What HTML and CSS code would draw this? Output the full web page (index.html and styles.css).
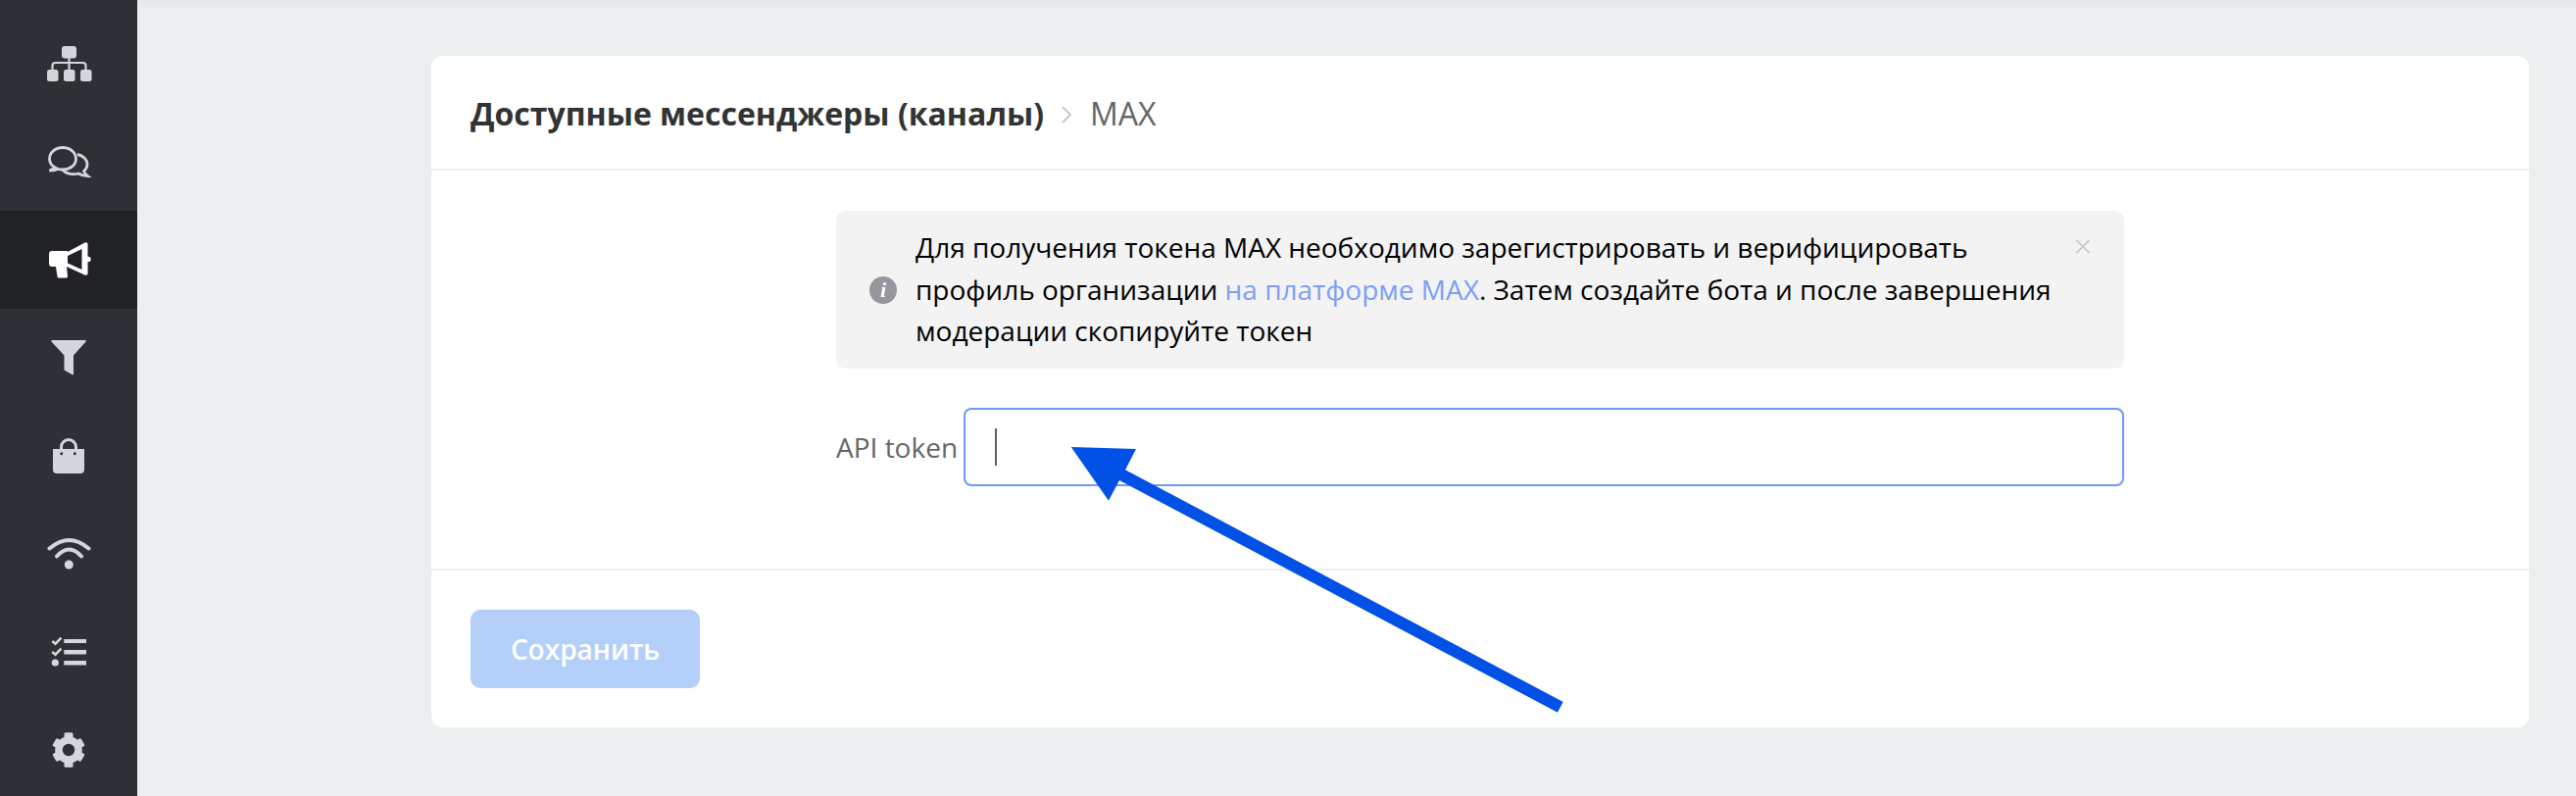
FILE: index.html
```html
<!DOCTYPE html>
<html lang="ru">
<head>
<meta charset="utf-8">
<title>MAX</title>
<link rel="stylesheet" href="styles.css">
</head>
<body>
<div class="page">
  <nav class="sidebar">
    <a class="nav-item"><svg class="icon" viewBox="0 0 48 48"><rect x="17" y="6" width="15" height="12.5" rx="3"/><rect x="2" y="30" width="11.5" height="12" rx="2.5"/><rect x="19" y="30" width="11.5" height="12" rx="2.5"/><rect x="36" y="30" width="11.5" height="12" rx="2.5"/><path class="line" d="M24.5 18v12M7.5 30v-4q0-3 3-3h28q3 0 3 3v4" stroke-width="2.2"/></svg></a>
    <a class="nav-item"><svg class="icon" viewBox="0 0 48 48"><path class="line" stroke-width="2.8" d="M10.5 30C6.5 28 4.5 24.5 4.5 21 4.5 14.5 10.5 9.5 18 9.500S31.500 14.500 31.500 21 25.500 32 18 32C16 32 14.500 31.700 13 31.300 10.500 32.800 7.500 33 4.500 33 6.500 32 8.500 31 10.500 30Z"/><path class="line" stroke-width="2.8" d="M33 16.500C39 17.500 43 22 43 26.500 43 29.500 41.500 32 39.500 33.500 40 35.500 41.500 37 43.500 38.500 40 38.500 36.500 37.500 34 36 32.500 36.500 31 36.700 29 36.700 24.500 36.700 20.500 35 18 32.500"/></svg></a>
    <a class="nav-item active"><svg class="icon" viewBox="0 0 48 48"><path d="M7 15H23V31H7Q4 31 4 28V18Q4 15 7 15ZM11 31H22L23 41Q23 42.500 21 42.500H14Q12.500 42.500 12.500 41Z"/><path fill-rule="evenodd" d="M22 16.500L40.500 6.500Q43.500 5.500 43.500 8V38Q43.500 40.500 40.500 39.500L22 31ZM22 20.500V27L37.500 34V13Z"/><circle cx="44" cy="23.500" r="2.700"/></svg></a>
    <a class="nav-item"><svg class="icon" viewBox="0 0 48 48"><path d="M7 6H41Q42.500 6 41.500 7.500L29 21.500V40.500Q29 42 27.500 41L19.500 36.500V21.500L6.500 7.500Q5.500 6 7 6Z"/></svg></a>
    <a class="nav-item"><svg class="icon" viewBox="0 0 48 48"><path class="line" stroke-width="3" d="M16.500 20V15a7.500 7.500 0 0 1 15 0V20"/><path fill-rule="evenodd" d="M8 17H40V38Q40 42 36 42H12Q8 42 8 38ZM16.700 20.200a1.500 1.500 0 1 0 .01 0ZM30.300 20.200a1.500 1.500 0 1 0 .01 0Z"/></svg></a>
    <a class="nav-item"><svg class="icon" viewBox="0 0 48 48"><path class="line" stroke-width="4" stroke-linecap="round" d="M4.500 18.500Q24.500 1.500 44.500 18.500M12 26.500Q24.500 12.500 37 26.500"/><circle cx="24.300" cy="35" r="4.500"/></svg></a>
    <a class="nav-item"><svg class="icon" viewBox="0 0 48 48"><path d="M19.300 11H42V15H19.300ZM19.300 22H42V26.500H19.300ZM19.300 33H42V37.500H19.300Z"/><circle cx="10.300" cy="35" r="3.600"/><path class="line" stroke-width="2.600" d="M7.300 13l3.200 2.700 6-6M7.300 24l3.200 2.700 6-6"/></svg></a>
    <a class="nav-item"><svg class="icon" viewBox="0 0 48 48"><circle class="line" cx="24" cy="24" r="10" stroke-width="7.500"/><g><rect x="19.500" y="6.300" width="9" height="8" rx="1.500"/><rect x="19.500" y="33.700" width="9" height="8" rx="1.500"/><rect class="tooth-a" x="19.500" y="7.300" width="9" height="8" rx="1.500"/><rect class="tooth-b" x="19.500" y="7.300" width="9" height="8" rx="1.500"/><rect class="tooth-c" x="19.500" y="7.300" width="9" height="8" rx="1.500"/><rect class="tooth-d" x="19.500" y="7.300" width="9" height="8" rx="1.500"/></g></svg></a>
  </nav>
  <main class="main">
    <section class="card">
      <header class="card-head">
        <h1 class="title">Доступные мессенджеры (каналы)</h1>
        <svg class="chevron" viewBox="0 0 12 20"><path d="M2 2l8 8-8 8"/></svg>
        <span class="crumb">MAX</span>
      </header>
      <div class="card-body">
        <div class="form">
          <div class="alert">
            <span class="alert-icon">i</span>
            <p class="alert-text">Для получения токена MAX необходимо зарегистрировать и верифицировать профиль организации <a class="link">на платформе MAX</a>. Затем создайте бота и после завершения модерации скопируйте токен</p>
            <svg class="alert-close" viewBox="0 0 16 16"><path d="M1 1l14 14M15 1L1 15"/></svg>
          </div>
          <div class="field">
            <label class="field-label">API token</label>
            <div class="input" role="textbox"><span class="caret"></span></div>
          </div>
        </div>
      </div>
      <footer class="card-foot">
        <button class="save" type="button">Сохранить</button>
      </footer>
    </section>
  </main>
  <svg class="arrow" viewBox="0 0 2628 812"><polygon points="1092.700,456 1159,458 1148,479.300 1594.700,716 1589,726.700 1142,490 1131,510.700"/></svg>
</div>
</body>
</html>
```
FILE: styles.css
```css
* { box-sizing: border-box; }
html, body { margin: 0; height: 812px; overflow: hidden; }
body { font-family: "Open Sans", "Noto Sans", sans-serif; background: #ebeff0; }

.page { position: relative; display: flex; width: 2628px; height: 812px; }

.sidebar { flex: 0 0 140px; background: #2e3036; padding-top: 15px; }
.nav-item { display: flex; align-items: center; justify-content: center; height: 100px; color: #d3d7db; }
.nav-item.active { background: #202226; color: #fff; }
.icon { width: 48px; height: 48px; fill: currentColor; }
.line { fill: none; stroke: currentColor; }
.tooth-a { transform: rotate(60deg); transform-origin: 24px 24px; }
.tooth-b { transform: rotate(120deg); transform-origin: 24px 24px; }
.tooth-c { transform: rotate(240deg); transform-origin: 24px 24px; }
.tooth-d { transform: rotate(300deg); transform-origin: 24px 24px; }

.main {
  flex: 1;
  padding: 57px 48px 0 300px;
  background: linear-gradient(#e3e7e8, #ebeff0 10px);
}
.card { background: #fff; border-radius: 12px; height: 685px; display: flex; flex-direction: column; }
.card-head {
  display: flex; align-items: center;
  height: 117px; padding: 2px 40px 0;
  border-bottom: 2px solid #eeeff0;
}
.title { margin: 0; font-size: 32px; font-weight: 700; color: #333; line-height: 44px; }
.chevron { width: 12px; height: 20px; margin: 2px 18px 0 17px; fill: none; stroke: #c2c6cc; stroke-width: 1.800; }
.crumb { font-size: 32px; color: #666; line-height: 44px; }

.card-body { height: 408px; padding: 41px 0 0 413px; border-bottom: 2px solid #eeeff0; }
.form { width: 1314px; }
.alert {
  position: relative; display: flex; align-items: center;
  height: 161px; padding: 0 70px 0 34px;
  background: #f3f3f3; border-radius: 10px;
}
.alert-icon {
  flex: 0 0 28px; height: 28px; margin-right: 19px;
  border-radius: 50%; background: #96969c; color: #fff;
  font: italic 700 22px/28px "Liberation Serif", serif; text-align: center;
}
.alert-text { margin: 0 0 1px; font-size: 28px; line-height: 42.700px; color: #000; }
.link { color: #7c9ff5; }
.alert-close { position: absolute; top: 29px; right: 34px; width: 16px; height: 15px; fill: none; stroke: #c6c8cc; stroke-width: 1.800; }

.field { display: flex; align-items: center; margin-top: 40px; }
.field-label { font-size: 28px; color: #666; margin-right: 6px; white-space: nowrap; }
.input {
  flex: 1; height: 80px; display: flex; align-items: center;
  padding-left: 30px;
  border: 2px solid #6b9bf5; border-radius: 8px; background: #fff;
}
.caret { width: 2px; height: 38px; background: #5f5f5f; }

.card-foot { padding: 40px; }
.save {
  display: block; width: 234px; height: 80px; padding: 0;
  border: 0; border-radius: 10px; background: #b3cffa; color: #fff;
  font: 600 28px "Open Sans", "Noto Sans", sans-serif;
}

.arrow { position: absolute; left: 0; top: 0; width: 2628px; height: 812px; fill: #0250e6; pointer-events: none; }
```
